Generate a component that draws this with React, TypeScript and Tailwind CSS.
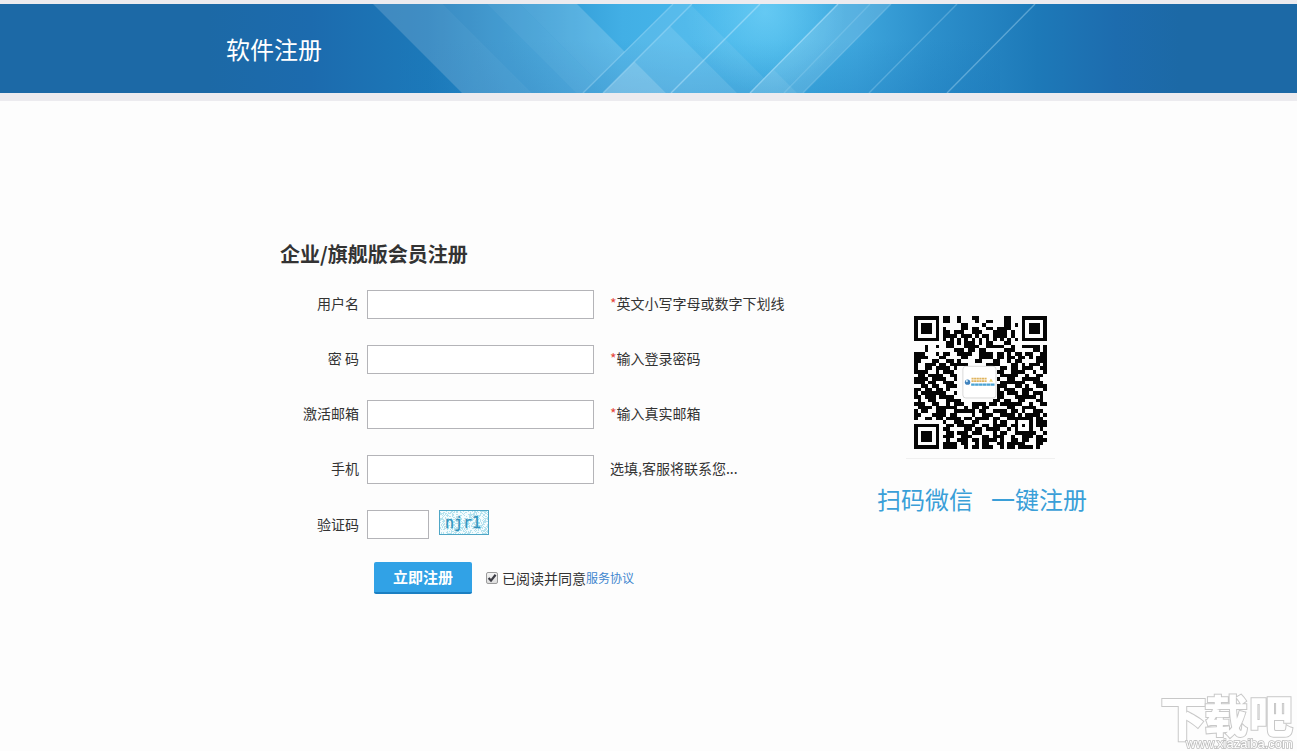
import type { ReactNode } from 'react';

const QR_ROWS = [
    '1111111011001000110000000110001111111',
    '1000001011001000010011000110001000001',
    '1011101000000110000100000110101011101',
    '1011101010000110110011011110001011101',
    '1011101011011100111000111101001011101',
    '1000001011110111010110111101001000001',
    '1111111010101010101010101010101111111',
    '0000000001101011101011000110000000000',
    '0001001001100011110011111001001111101',
    '0001000000011101101100000111000001101',
    '1110001011001111001111011010110110011',
    '1111000110000110001111011011011010111',
    '1100011001101000011000110010110000111',
    '1001110110111110000011110001101011101',
    '1001101111010000000000001101101110011',
    '1111001011100000000000011001111001001',
    '0110111100110000000000001111100100110',
    '1111011110010000000000010011001111100',
    '1110110011100000000000001111111001110',
    '0011011001110000000000011100110100111',
    '1101101101000000000000010111001110001',
    '1011111110010000000000011011101101110',
    '1101110111100000000000011000111111010',
    '0100110001111000000000110110011000110',
    '1110011001011100111101101111110010011',
    '0111101111110010110110000011001111000',
    '1011001110011111101100111101101001110',
    '1100011110110000100111001111010111101',
    '1001101101111011011110110011111110110',
    '0000000010011100110000101100100010111',
    '1111111001101111100110111101101010111',
    '1000001011000011011011110010100010010',
    '1011101001101110111000101100111111001',
    '1011101011100111000110111001001110110',
    '1011101001001110110111101001101100111',
    '1000001011110110010110011011111000110',
    '1111111011110010110111001011011110100',
];

const FIELDS = [
    { id: 'username', type: 'text', label: '用户名', hint: '英文小写字母或数字下划线', required: true },
    { id: 'password', type: 'password', label: '密 码', hint: '输入登录密码', required: true },
    { id: 'email', type: 'text', label: '激活邮箱', hint: '输入真实邮箱', required: true },
    { id: 'phone', type: 'text', label: '手机', hint: '选填,客服将联系您...', required: false },
];

// x at the top edge, x at the bottom edge, stroke opacity
const LINES = [
    [673, 583, 0.3],
    [692, 603, 0.35],
    [760, 671, 0.45],
    [838, 750, 0.5],
    [870, 784, 0.18],
    [891, 803, 0.22],
    [957, 869, 0.25],
    [1035, 947, 0.35],
];

function HeaderArt() {
    return (
        <svg
            className="absolute inset-0 h-full w-full"
            viewBox="0 0 1297 89"
            preserveAspectRatio="xMidYMid slice"
            aria-hidden="true"
        >
            <defs>
                <linearGradient id="sky" gradientUnits="userSpaceOnUse" x1="0" y1="0" x2="1297" y2="0">
                    <stop offset="0" stopColor="#1c69a6" />
                    <stop offset="0.16" stopColor="#1c69a6" />
                    <stop offset="0.24" stopColor="#1c6bae" />
                    <stop offset="0.33" stopColor="#1c79b9" />
                    <stop offset="0.42" stopColor="#2f98d3" />
                    <stop offset="0.48" stopColor="#42afe5" />
                    <stop offset="0.53" stopColor="#45b5ea" />
                    <stop offset="0.6" stopColor="#42b3e6" />
                    <stop offset="0.66" stopColor="#3da5dc" />
                    <stop offset="0.72" stopColor="#2c8fcb" />
                    <stop offset="0.8" stopColor="#1d79b8" />
                    <stop offset="0.86" stopColor="#1d6cae" />
                    <stop offset="0.91" stopColor="#1c69a6" />
                    <stop offset="1" stopColor="#1c69a6" />
                </linearGradient>
                <linearGradient id="shade" x1="0" y1="0" x2="0" y2="1">
                    <stop offset="0.4" stopColor="#1b78bb" stopOpacity="0" />
                    <stop offset="1" stopColor="#1b78bb" stopOpacity="0.3" />
                </linearGradient>
                <radialGradient id="glow" gradientUnits="userSpaceOnUse" cx="765" cy="8" r="80">
                    <stop offset="0" stopColor="#7bd7fb" stopOpacity="0.6" />
                    <stop offset="1" stopColor="#7bd7fb" stopOpacity="0" />
                </radialGradient>
                <clipPath id="left">
                    <path d="M0 0H673L583 89H0Z" />
                </clipPath>
                <clipPath id="middle">
                    <path d="M692 0H838L750 89H603Z" />
                </clipPath>
            </defs>
            <rect width="1297" height="89" fill="url(#sky)" />
            <rect x="400" width="600" height="89" fill="url(#shade)" />
            <rect x="680" width="180" height="89" fill="url(#glow)" />
            <g fill="#fff" clipPath="url(#left)">
                <path d="M373 0H443L532 89H462Z" opacity="0.16" />
                <path d="M443 0H487L576 89H532Z" opacity="0.13" />
                <path d="M487 0H520L609 89H576Z" opacity="0.16" />
                <path d="M520 0H577L666 89H609Z" opacity="0.17" />
            </g>
            <path d="M673 0H692L603 89H583Z" fill="#fff" opacity="0.1" />
            <g fill="#fff" clipPath="url(#middle)">
                <path d="M488 0H577L666 89H577Z" opacity="0.3" />
                <path d="M577 0H648L737 89H666Z" opacity="0.17" />
                <path d="M648 0H690L779 89H737Z" opacity="0.07" />
            </g>
            <g fill="#fff">
                <path d="M838 0H891L803 89H750Z" opacity="0.14" />
                <path d="M774 66L797 89H750Z" opacity="0.08" />
            </g>
            <g stroke="#c6ecff" strokeWidth="1.4">
                {LINES.map(([top, bottom, opacity]) => (
                    <line key={top} x1={top} y1="0" x2={bottom} y2="89" opacity={opacity} />
                ))}
            </g>
        </svg>
    );
}

function QrCode() {
    return (
        <svg className="h-[133px] w-[133px]" viewBox="0 0 37 37" shapeRendering="crispEdges" role="img" aria-label="QR">
            {QR_ROWS.map((row, y) =>
                row.split('').map((cell, x) =>
                    cell === '1' ? <rect key={`${x}-${y}`} x={x} y={y} width="1" height="1" fill="#050505" /> : null,
                ),
            )}
            <rect x="13.6" y="14" width="9.2" height="8.8" rx="0.8" fill="#fff" stroke="#ccc" strokeWidth="0.2" shapeRendering="auto" />
            <g shapeRendering="auto">
                <circle cx="14.9" cy="18.4" r="0.75" fill="#3f82bd" />
                <circle cx="14.7" cy="18.1" r="0.3" fill="#d8ecf8" />
                <path d="M16 17.4H20.3M16 18.1H20.3" stroke="#e0b45e" strokeWidth="0.5" strokeDasharray="0.6 0.12" />
                <path d="M20.9 18.3L21.4 17.4L22 18.3Z" fill="#eed37a" />
                <path d="M15.9 19.1H22.5" stroke="#4aa3d4" strokeWidth="0.6" strokeDasharray="1 0.1" />
            </g>
        </svg>
    );
}

function Captcha() {
    const dots: ReactNode[] = [];
    let seed = 7;
    for (let y = 1; y < 24; y++) {
        for (let x = 1; x < 49; x++) {
            seed = (seed * 16807) % 2147483647;
            if (seed % 100 < 42) {
                dots.push(<rect key={`${x}-${y}`} x={x} y={y} width="1" height="1" />);
            }
        }
    }
    return (
        <svg className="ml-[10px] h-[25px] w-[50px]" viewBox="0 0 50 25" role="img" aria-label="njr1">
            <rect x="0.5" y="0.5" width="49" height="24" fill="#f4fcfe" stroke="#4fa6c6" />
            <g fill="#b5e2ee">{dots}</g>
            <text
                x="6"
                y="18"
                fill="#2f93bd"
                stroke="#2f93bd"
                strokeWidth="0.3"
                fontSize="15"
                fontFamily="'DejaVu Sans Mono', monospace"
            >
                njr1
            </text>
        </svg>
    );
}

function Watermark() {
    return (
        <svg className="pointer-events-none fixed right-0 bottom-0 h-20 w-[138px]" viewBox="0 0 138 80" aria-hidden="true">
            <g
                fill="#fff"
                stroke="#c8c8c8"
                strokeWidth="2"
                paintOrder="stroke"
                fontWeight="900"
                fontFamily="'Noto Sans CJK SC', sans-serif"
            >
                <text x="1" y="65" fontSize="47">下</text>
                <text x="45" y="62" fontSize="44">载</text>
                <text x="90" y="62" fontSize="44">吧</text>
            </g>
            <text
                x="27"
                y="77"
                fill="#fff"
                stroke="#bdbdbd"
                strokeWidth="1.6"
                paintOrder="stroke"
                fontSize="13"
                fontFamily="'Liberation Sans', sans-serif"
            >
                www.xiazaiba.com
            </text>
        </svg>
    );
}

export default function App() {
    return (
        <div className="min-h-screen bg-[#fdfdfd] font-['Noto_Sans_CJK_SC',sans-serif] text-sm text-[#333]">
            <header className="relative border-t-4 border-b-8 border-[#ecebef] bg-[#1c69a6]">
                <HeaderArt />
                <div className="relative mx-auto flex h-[89px] max-w-[877px] items-center px-4">
                    <h1 className="text-2xl text-white">软件注册</h1>
                </div>
            </header>

            <main className="mx-auto flex max-w-[877px] items-start justify-between pt-[139px] pl-[70px]">
                <form onSubmit={(e) => e.preventDefault()}>
                    <h2 className="mb-[22px] text-xl leading-7 font-bold">企业/旗舰版会员注册</h2>

                    <div className="flex flex-col gap-[26px]">
                        {FIELDS.map((field) => (
                            <div key={field.id} className="flex h-[29px] items-center">
                                <label htmlFor={field.id} className="mr-2 w-[79px] pb-1 text-right">
                                    {field.label}
                                </label>
                                <input
                                    id={field.id}
                                    type={field.type}
                                    className="h-[29px] w-[227px] border border-[#b4b4b8] bg-white px-2 outline-none"
                                />
                                <span className="ml-4 pb-1 whitespace-nowrap">
                                    {field.required && <span className="text-[#e5463c]">*</span>}
                                    {field.hint}
                                </span>
                            </div>
                        ))}

                        <div className="flex h-[29px] items-start">
                            <label htmlFor="captcha" className="mr-2 w-[79px] text-right leading-7">
                                验证码
                            </label>
                            <input
                                id="captcha"
                                type="text"
                                className="h-[29px] w-[62px] border border-[#b4b4b8] bg-white px-2 outline-none"
                            />
                            <Captcha />
                        </div>
                    </div>

                    <div className="mt-[23px] ml-[94px] flex h-8 items-center">
                        <button
                            type="submit"
                            className="h-8 w-[98px] rounded-xs border-b-2 border-[#1b7fc2] bg-[#31a2e6] text-[15px] font-bold text-white"
                        >
                            立即注册
                        </button>
                        <span className="relative ml-[14px] flex">
                            <input
                                id="agree"
                                type="checkbox"
                                defaultChecked
                                className="peer h-3 w-3 appearance-none rounded-xs border border-[#9b9b9b] bg-linear-to-b from-[#f4f4f4] to-[#dedede]"
                            />
                            <svg
                                className="pointer-events-none absolute inset-0 hidden h-3 w-3 peer-checked:block"
                                viewBox="0 0 12 12"
                                fill="none"
                                stroke="#3c3c44"
                                strokeWidth="2.2"
                            >
                                <path d="M2.6 6L5 8.6L9.6 2.8" />
                            </svg>
                        </span>
                        <label htmlFor="agree" className="ml-1">
                            已阅读并同意
                        </label>
                        <a href="#agreement" className="text-xs text-[#3d86cf]">
                            服务协议
                        </a>
                    </div>
                </form>

                <aside className="mt-[76px] flex flex-col items-center">
                    <div className="mr-1 border-b border-[#f0f0f0] px-2 pb-[9px]">
                        <QrCode />
                    </div>
                    <p className="mt-6 flex gap-[18px] text-2xl whitespace-nowrap text-[#3a9fd8]">
                        <span>扫码微信</span>
                        <span>一键注册</span>
                    </p>
                </aside>
            </main>

            <Watermark />
        </div>
    );
}
